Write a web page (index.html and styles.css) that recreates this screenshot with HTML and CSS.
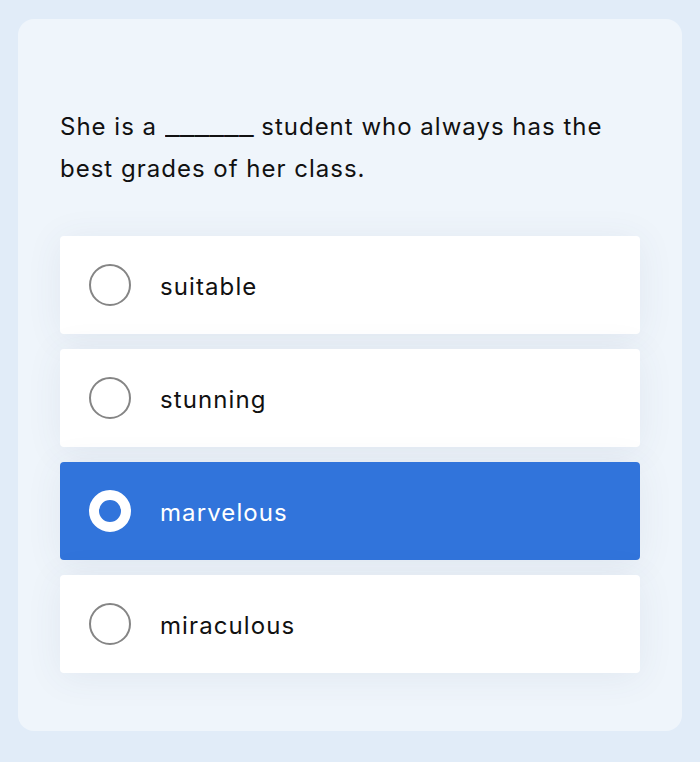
FILE: index.html
```html
<!DOCTYPE html>
<html>
<head>
<meta charset="utf-8">
<link rel="stylesheet" href="styles.css">
</head>
<body>
<div class="card">
  <p class="question"><span>She is a </span><span class="blank">______</span><span> student who always has the</span><br><span>best grades of her class.</span></p>
  <div class="options">
    <div class="option"><span class="radio"></span><span class="label">suitable</span></div>
    <div class="option"><span class="radio"></span><span class="label">stunning</span></div>
    <div class="option selected"><span class="radio"></span><span class="label">marvelous</span></div>
    <div class="option"><span class="radio"></span><span class="label">miraculous</span></div>
  </div>
</div>
</body>
</html>
```
FILE: styles.css
```css
html, body {
  margin: 0;
  padding: 0;
}
body {
  background: #e1ecf8;
  width: 700px;
  height: 762px;
  font-family: Inter, "Open Sans", sans-serif;
  color: #111111;
}
.card {
  margin: 19px 18px 0 18px;
  height: 712px;
  box-sizing: border-box;
  background: #eff5fb;
  border-radius: 16px;
  padding: 87px 42px 0 42px;
}
.question {
  margin: 0;
  font-size: 24px;
  line-height: 42px;
  letter-spacing: 1px;
  width: 580px;
}
.blank {
  display: inline-block;
  letter-spacing: 0;
  transform: scaleX(1.35);
  transform-origin: 0 50%;
  margin-right: 23px;
}
.options {
  margin-top: 46px;
  display: flex;
  flex-direction: column;
  gap: 15px;
}
.option {
  height: 98px;
  background: #ffffff;
  border-radius: 4px;
  display: flex;
  align-items: center;
  padding-left: 29px;
  box-shadow: 0 4px 36px rgba(60, 80, 120, 0.08);
}
.radio {
  width: 42px;
  height: 42px;
  box-sizing: border-box;
  border: 2px solid #858585;
  border-radius: 50%;
  flex: none;
}
.label {
  margin-left: 29px;
  font-size: 24px;
  letter-spacing: 1.1px;
  padding-top: 2px;
}
.option.selected {
  background: #3174db;
  color: #ffffff;
}
.option.selected .radio {
  border: 10.5px solid #ffffff;
}
```
